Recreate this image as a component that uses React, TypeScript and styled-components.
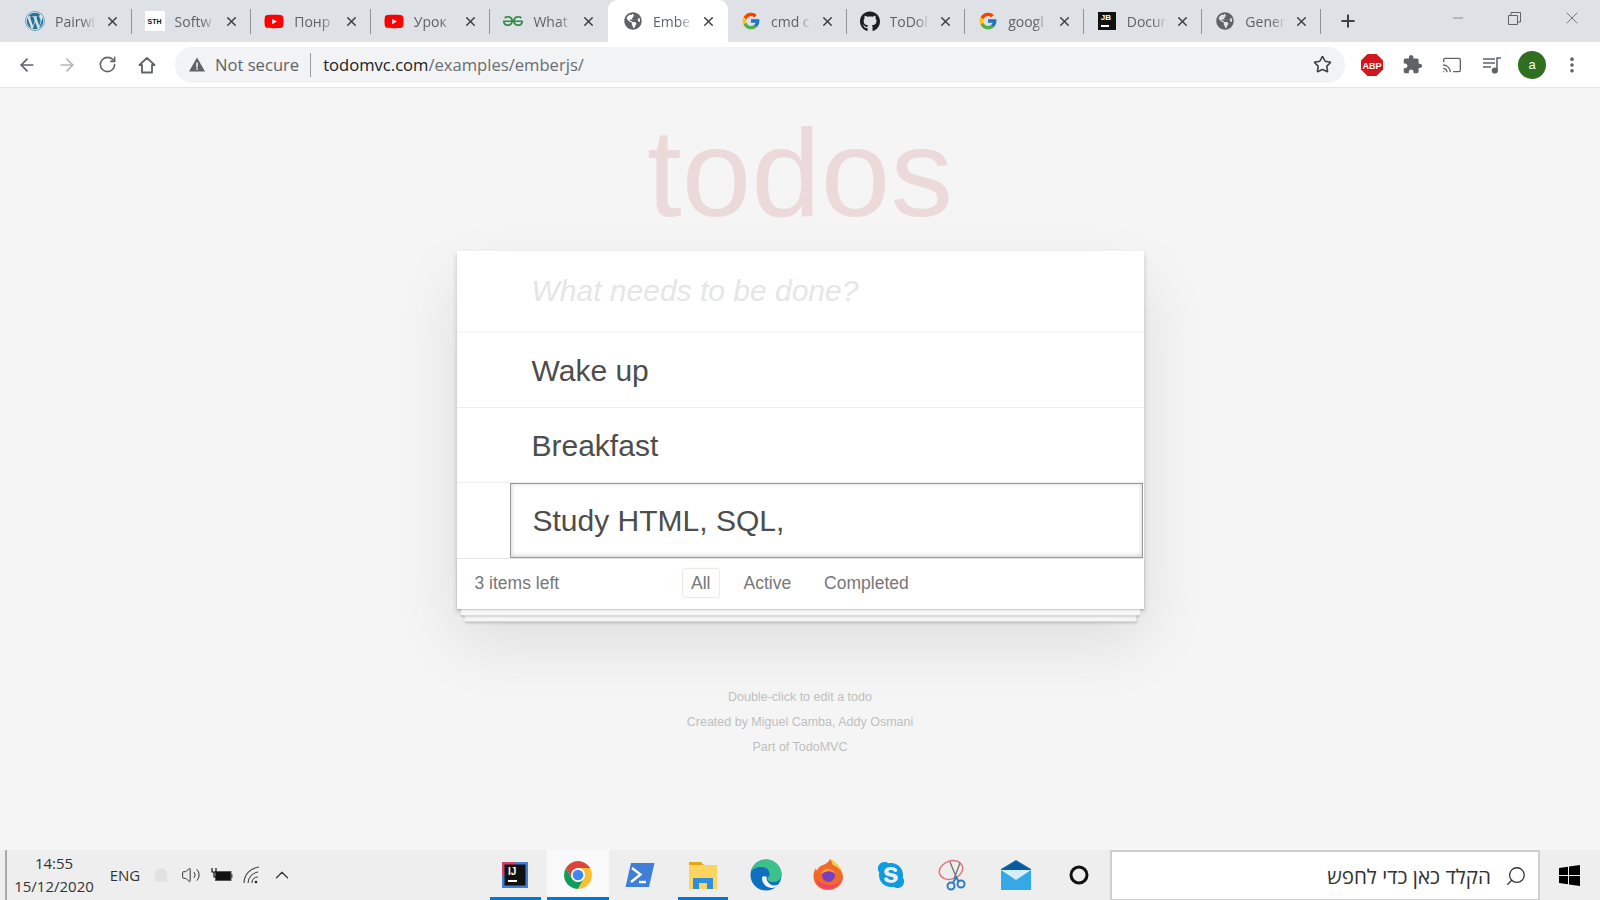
import React from 'react'
import styled, { createGlobalStyle } from 'styled-components'
import { FaWordpress, FaYoutube, FaGithub, FaGlobeAmericas, FaSkype } from 'react-icons/fa'
import { FcGoogle } from 'react-icons/fc'
import { SiGeeksforgeeks } from 'react-icons/si'
import { ArrowLeft, ArrowRight, RotateCw, Star, Cast, MoreVertical, Plus, X, Minus, Search, ChevronUp, Volume2 } from 'lucide-react'

const GlobalStyle = createGlobalStyle`
  html, body { margin: 0; padding: 0; height: 900px; overflow: hidden; }
  body { background: #f5f5f5; font-family: "Liberation Sans", Arial, sans-serif; }
  * { box-sizing: border-box; }
`

const Screen = styled.div`
  width: 1600px;
  height: 900px;
  display: flex;
  flex-direction: column;
  overflow: hidden;
`

/* browser chrome */
const TabStrip = styled.div`
  height: 42px;
  flex: none;
  background: #dee1e6;
  display: flex;
  align-items: stretch;
  padding-left: 12px;
`

const Tab = styled.div<{ $active?: boolean; $sep?: boolean }>`
  position: relative;
  width: 118.6px;
  flex: none;
  display: flex;
  align-items: center;
  padding: 0 12px 0 ${p => (p.$active ? 15 : 13)}px;
  background: ${p => (p.$active ? '#fff' : 'transparent')};
  border-radius: ${p => (p.$active ? '9px 9px 0 0' : '0')};

  /* the strip is not evenly spaced either side of the selected tab */
  &:nth-child(-n + 4) { width: 119.6px; }
  &:nth-child(5) { width: 117.6px; }
  &:nth-child(6) { width: 120px; }

  ${p => p.$sep && `
    &::after {
      content: '';
      position: absolute;
      right: 0;
      top: 9px;
      height: 25px;
      width: 1px;
      background: #8f9296;
    }
  `}
`

const Favicon = styled.span`
  width: 20px;
  height: 20px;
  flex: none;
  display: flex;
  align-items: center;
  justify-content: center;
`

const TabTitle = styled.span`
  flex: 1;
  margin-left: 10px;
  white-space: nowrap;
  font-family: "Open Sans", "Liberation Sans", sans-serif;
  font-size: 14px;
  color: #5f6368;
  -webkit-mask-image: linear-gradient(to right, #000 62%, transparent 95%);
  mask-image: linear-gradient(to right, #000 62%, transparent 95%);
`

const CloseBtn = styled(X)`
  flex: none;
  margin-left: 6px;
  color: #3c4043;
`

const SthIcon = styled.span`
  width: 20px;
  height: 20px;
  background: #fff;
  display: flex;
  align-items: center;
  justify-content: center;
  font-size: 7px;
  font-weight: 700;
  color: #111;
`

const JbIcon = styled.span`
  width: 18px;
  height: 18px;
  background: #111;
  color: #fff;
  font-size: 8px;
  font-weight: 700;
  padding: 1px 0 0 3px;
  line-height: 9px;
  &::after {
    content: '';
    display: block;
    width: 8px;
    height: 1.5px;
    background: #fff;
    margin-top: 3px;
  }
`

const NewTab = styled.div`
  width: 54px;
  flex: none;
  display: flex;
  align-items: center;
  justify-content: center;
  color: #3c4043;
`

const WindowControls = styled.div`
  margin-left: auto;
  display: flex;
  color: #5f6368;
`

const WindowBtn = styled.div`
  width: 57px;
  height: 36px;
  display: flex;
  align-items: center;
  justify-content: center;
`

const Toolbar = styled.div`
  height: 46px;
  flex: none;
  background: #fff;
  border-bottom: 1px solid #e4e4e4;
  display: flex;
  align-items: center;
  padding: 0 8px 0 7px;
`

const NavBtn = styled.div<{ $dim?: boolean }>`
  width: 40px;
  height: 36px;
  flex: none;
  display: flex;
  align-items: center;
  justify-content: center;
  color: ${p => (p.$dim ? '#b4b6b9' : '#5f6368')};
`

const Omnibox = styled.div`
  width: 1170px;
  height: 36px;
  margin: 0 7px 0 8px;
  flex: none;
  background: #f1f3f4;
  border-radius: 18px;
  display: flex;
  align-items: center;
  padding-left: 14px;
  font-family: "Open Sans", "Liberation Sans", sans-serif;
  font-size: 16.6px;
  color: #5f6368;
`

const NotSecure = styled.span`
  margin-left: 10px;
  padding-right: 11px;
  margin-right: 12px;
  border-right: 1px solid #9a9da1;
  line-height: 24px;
`

const Url = styled.span`
  flex: 1;
  color: #6a6d71;
  b { font-weight: 400; color: #202124; }
`

const StarIcon = styled(Star)`
  margin-right: 13px;
  color: #3c4043;
`

const AbpBadge = styled.svg`
  display: block;
`

const Avatar = styled.div`
  width: 28px;
  height: 28px;
  border-radius: 50%;
  background: #2f6f1f;
  color: #fff;
  font-size: 13px;
  display: flex;
  align-items: center;
  justify-content: center;
`

/* todo app */
const Page = styled.main`
  flex: 1;
  min-height: 0;
  background: #f5f5f5;
  display: flex;
  flex-direction: column;
  align-items: center;
`

const Title = styled.h1`
  margin: 6px 0 0;
  height: 157px;
  line-height: 157px;
  font-size: 125px;
  font-weight: 400;
  color: #ecdada;
  text-align: center;
`

const Card = styled.section`
  position: relative;
  z-index: 0;
  width: 687px;
  background: #fff;
  box-shadow: 0 2.5px 5px rgba(0, 0, 0, 0.2), 0 31px 62px rgba(0, 0, 0, 0.1);
`

const NewTodo = styled.div`
  height: 82px;
  padding: 0 0 2px 75px;
  display: flex;
  align-items: center;
  font-size: 30px;
  font-style: italic;
  color: #e6e6e6;
  box-shadow: inset 0 -2px 1px rgba(0, 0, 0, 0.03);
`

const Row = styled.div`
  height: 75px;
  padding: 1px 0 0 75px;
  display: flex;
  align-items: center;
  font-size: 30px;
  color: #4d4d4d;
  border-bottom: 1px solid #ededed;
`

const EditRow = styled.div`
  height: 75px;
  padding-left: 53px;
  display: flex;
`

const EditBox = styled.div`
  flex: 1;
  margin-right: 1px;
  border: 1px solid #999;
  box-shadow: inset 0 -1px 5px rgba(0, 0, 0, 0.2);
  padding-left: 22px;
  display: flex;
  align-items: center;
  font-size: 30px;
  color: #4d4d4d;
`

const Footer = styled.footer`
  position: relative;
  height: 51px;
  display: flex;
  align-items: center;
  padding: 0 0 2px 18px;
  font-size: 17.5px;
  color: #777;
  border-top: 1px solid #e6e6e6;

  &::before {
    content: '';
    position: absolute;
    left: 0;
    right: 0;
    top: 0;
    bottom: 0;
    z-index: -1;
    box-shadow: 0 1.25px 1.25px rgba(0, 0, 0, 0.2), 0 10px 0 -3.75px #f6f6f6,
      0 11.25px 1.25px -3.75px rgba(0, 0, 0, 0.2), 0 20px 0 -7.5px #f6f6f6,
      0 21.25px 2.5px -7.5px rgba(0, 0, 0, 0.2);
  }
`

const Count = styled.span`
  width: 207px;
`

const Filter = styled.span<{ $on?: boolean }>`
  height: 30px;
  padding: 0 8.5px;
  margin-right: 14px;
  display: flex;
  align-items: center;
  border: 1px solid ${p => (p.$on ? 'rgba(175, 47, 47, 0.12)' : 'transparent')};
  border-radius: 3px;
`

const Info = styled.footer`
  margin-top: 76px;
  font-size: 12.5px;
  line-height: 25px;
  color: #bfbfbf;
  text-align: center;
`

/* windows taskbar */
const Taskbar = styled.div`
  height: 50px;
  flex: none;
  background: #eeeeee;
  display: flex;
  align-items: stretch;
`

const Tray = styled.div`
  width: 484px;
  flex: none;
  margin-left: 5px;
  border-left: 2px solid #a9a9a9;
  display: flex;
  align-items: center;
  color: #333;
`

const Clock = styled.div`
  width: 94px;
  flex: none;
  font-family: "Open Sans", "Liberation Sans", sans-serif;
  font-size: 15px;
  line-height: 23px;
  text-align: center;
`

const TrayItem = styled.div<{ $w: number }>`
  width: ${p => p.$w}px;
  flex: none;
  display: flex;
  align-items: center;
  justify-content: center;
  font-family: "Open Sans", "Liberation Sans", sans-serif;
  font-size: 15px;
  color: #333;
`

const Apps = styled.div`
  display: flex;
  margin-left: -5px;
`

const AppSlot = styled.div<{ $running?: boolean; $active?: boolean }>`
  position: relative;
  width: 62.6px;
  display: flex;
  align-items: center;
  justify-content: center;
  background: ${p => (p.$active ? '#f9f9f9' : 'transparent')};
  ${p => p.$running && `
    &::after {
      content: '';
      position: absolute;
      bottom: 0;
      height: 3px;
      left: ${p.$active ? 0 : 6}px;
      right: ${p.$active ? 0 : 6}px;
      background: #0078d7;
    }
  `}
`

const SearchBox = styled.div`
  width: 430px;
  flex: none;
  background: #fff;
  border: 2px solid #cfcfcf;
  border-bottom-width: 1px;
  display: flex;
  align-items: center;
  justify-content: flex-end;
  gap: 14px;
  padding-right: 11px;
  font-family: "Open Sans", "Liberation Sans", sans-serif;
  font-size: 20.6px;
  color: #333;
`

const SearchGlass = styled(Search)`
  transform: scaleX(-1);
  color: #333;
`

const StartBtn = styled.div`
  flex: 1;
  display: flex;
  align-items: center;
  justify-content: center;
`

const tabs: { icon: React.ReactNode; title: string; active?: boolean; sep?: boolean }[] = [
  { icon: <FaWordpress size={20} color="#21759b" />, title: 'Pairwi', sep: true },
  { icon: <SthIcon>STH</SthIcon>, title: 'Softw', sep: true },
  { icon: <FaYoutube size={21} color="#f00" />, title: 'Понр', sep: true },
  { icon: <FaYoutube size={21} color="#f00" />, title: 'Урок', sep: true },
  { icon: <SiGeeksforgeeks size={20} color="#2f8d46" />, title: 'What' },
  { icon: <FaGlobeAmericas size={18} color="#5f6368" />, title: 'Embe', active: true },
  { icon: <FcGoogle size={20} />, title: 'cmd c', sep: true },
  { icon: <FaGithub size={21} color="#1b1f23" />, title: 'ToDol', sep: true },
  { icon: <FcGoogle size={20} />, title: 'googl', sep: true },
  { icon: <JbIcon>JB</JbIcon>, title: 'Docur', sep: true },
  { icon: <FaGlobeAmericas size={18} color="#5f6368" />, title: 'Gener', sep: true },
]

const IdeaIcon = () => (
  <svg width="26" height="26" viewBox="0 0 26 26">
    <rect width="26" height="26" fill="#3f7fd8" />
    <rect width="13" height="13" fill="#d0406f" />
    <rect x="2.5" y="2.5" width="21" height="21" fill="#111" />
    <text x="6" y="13" fontSize="10" fontWeight="700" fill="#fff" fontFamily="Liberation Sans">IJ</text>
    <rect x="6" y="18" width="9" height="2" fill="#fff" />
  </svg>
)

const ChromeIcon = () => (
  <svg width="28" height="28" viewBox="4 4 40 40">
    <path d="M6.68 14A20 20 0 0 1 41.32 14H24a10 10 0 0 0-8.66 15z" fill="#db4437" />
    <path d="M6.68 14A20 20 0 0 0 24 44l8.66-15a10 10 0 0 1-17.32 0z" fill="#0f9d58" />
    <path d="M41.32 14A20 20 0 0 1 24 44l8.66-15A10 10 0 0 0 24 14z" fill="#fbc02d" />
    <circle cx="24" cy="24" r="9.5" fill="#fff" />
    <circle cx="24" cy="24" r="7.6" fill="#4285f4" />
  </svg>
)

const ShellIcon = () => (
  <svg width="30" height="26" viewBox="0 0 30 26">
    <path d="M6 1h23.5L24 25H.5z" fill="#3f7fd8" />
    <path d="M7 6l8.5 6.5L6 20" fill="none" stroke="#fff" strokeWidth="2.4" />
    <path d="M14 20h7" stroke="#fff" strokeWidth="2.4" />
  </svg>
)

const FolderIcon = () => (
  <svg width="28" height="28" viewBox="0 0 28 28">
    <path d="M0 1h12l3 3h-15z" fill="#e2a51c" />
    <rect y="4" width="28" height="24" fill="#fcd462" />
    <path d="M4 28V17h20v11h-6v-6h-8v6z" fill="#2f8fd8" />
  </svg>
)

const EdgeIcon = () => (
  <svg width="32" height="32" viewBox="0 0 32 32">
    <circle cx="16" cy="16" r="15.5" fill="#0f6fc0" />
    <path d="M1 13C3 5 9 .5 16 .5c9 0 15.5 7 15.5 15 0 5-4 7.5-8 7.5-3.5 0-6-1-6-3 0-1.5 2-2 2-5 0-4-3-7-8-7-5 0-9 2-10.5 5z" fill="#3cc18a" />
    <path d="M12 19c0 6 5 10 10 10 2 0 5-1 7-4-3 2-7 1.5-8.5.5C17 23 16 20 17 18c-2-1-5-1-5 1z" fill="#eef6fb" />
  </svg>
)

const FirefoxIcon = () => (
  <svg width="30" height="32" viewBox="0 0 30 32">
    <path d="M15 31C6.5 31 .5 25 .5 17.5.5 14 1.5 11 3 9c0 1 .5 2 1 2.5C5 8.5 8 6.500 10 6c3-1 6-3 7-6 3 3 2 5 2 5 5 1 11 6 11 13 0 7-6.5 13-15 13z" fill="#f2692c" />
    <path d="M18 0c6 4 12 10 12 18 0-3-2-7-5-9-2-2-4-2-6-4 .5-2 0-3-1-5z" fill="#ffc93c" />
    <path d="M3 20c1 6 6 10 12 10 6 0 11-4 13-9-3 4-8 6-13 5-5-.5-9-3-12-6z" fill="#f0416c" />
    <circle cx="15.5" cy="16.5" r="6.5" fill="#7a3fc0" />
    <path d="M8 15c1-4 5-6 9-5 3 .5 5 3 5 5-2-2-5-3-8-2.5-2 .5-4 1.5-6 2.5z" fill="#f89a3c" />
  </svg>
)

const SnipIcon = () => (
  <svg width="30" height="32" viewBox="0 0 30 32" fill="none">
    <ellipse cx="13" cy="11" rx="12" ry="9" stroke="#e4746f" strokeWidth="1.4" transform="rotate(-20 13 11)" />
    <path d="M12 3l7 17M22 4l-6 16" stroke="#777" strokeWidth="1.4" />
    <circle cx="13" cy="27" r="3.5" stroke="#2f7fc4" strokeWidth="2" />
    <circle cx="23" cy="25" r="3.5" stroke="#2f7fc4" strokeWidth="2" />
    <path d="M15 24l3-6 3 5" stroke="#2f7fc4" strokeWidth="2" />
  </svg>
)

const MailIcon = () => (
  <svg width="30" height="30" viewBox="0 0 30 30">
    <path d="M0 9L15 0l15 9v21H0z" fill="#0f74bf" />
    <rect y="10" width="30" height="20" fill="#35a8e8" />
    <path d="M0 10h30L15 20z" fill="#d5eefb" />
    <path d="M0 10L15 1l15 9z" fill="#0a5a9c" />
  </svg>
)

const CortanaIcon = () => (
  <svg width="20" height="20" viewBox="0 0 20 20">
    <circle cx="10" cy="10" r="8" fill="none" stroke="#111" strokeWidth="3" />
  </svg>
)

const WinLogo = () => (
  <svg width="21" height="21" viewBox="0 0 21 21" fill="#000">
    <path d="M0 3l9-1.3V10H0zM10 1.5L21 0v10H10zM0 11h9v8.3L0 18zM10 11h11v10l-11-1.5z" />
  </svg>
)

const BatteryIcon = () => (
  <svg width="22" height="14" viewBox="0 0 22 14">
    <rect x="4.5" y="3.5" width="15.5" height="9" fill="#111" stroke="#555" />
    <rect x="20" y="6" width="1.5" height="4" fill="#555" />
    <path d="M1 0v4h4V0M3 4v5h3" fill="none" stroke="#111" strokeWidth="1.2" />
  </svg>
)

const WifiIcon = () => (
  <svg width="18" height="18" viewBox="0 0 18 18" fill="none" stroke="#444" strokeWidth="1.1">
    <path d="M1 17C1 9 7 2 16 1M5 17c0-5 4-10 10-11M9 17c0-3 2-6 6-6" />
    <circle cx="13" cy="16" r="1.3" fill="#222" stroke="none" />
  </svg>
)

const CloudIcon = () => (
  <svg width="18" height="16" viewBox="0 0 18 16">
    <circle cx="9" cy="7" r="6" fill="#e2e2e2" />
    <rect x="3" y="8" width="12" height="7" fill="#e2e2e2" />
  </svg>
)

const HomeIcon = () => (
  <svg width="20" height="20" viewBox="0 0 24 24" fill="none" stroke="currentColor" strokeWidth="2.2" strokeLinejoin="round">
    <path d="M3 12L12 3.5 21 12h-3v9H6v-9z" />
  </svg>
)

const ExtensionIcon = () => (
  <svg width="21" height="21" viewBox="0 0 24 24" fill="#5f6368">
    <path d="M20.5 11H19V7c0-1.1-.9-2-2-2h-4V3.5C13 2.12 11.88 1 10.5 1S8 2.12 8 3.5V5H4c-1.1 0-1.99.9-1.99 2v3.8H3.5c1.49 0 2.7 1.21 2.7 2.7s-1.21 2.7-2.7 2.7H2V20c0 1.1.9 2 2 2h3.8v-1.500c0-1.49 1.21-2.7 2.7-2.7 1.49 0 2.7 1.21 2.7 2.7V22H17c1.1 0 2-.9 2-2v-4h1.500c1.38 0 2.5-1.12 2.5-2.5S21.88 11 20.5 11z" />
  </svg>
)

const QueueIcon = () => (
  <svg width="20" height="20" viewBox="0 0 20 20" fill="none" stroke="#5f6368" strokeWidth="1.6">
    <path d="M1 4h12M1 8h12M1 12h8M15 15V3h4" />
    <circle cx="12.8" cy="15.5" r="2.3" fill="#5f6368" />
  </svg>
)

const App: React.FC = () => {
  return (
    <Screen>
      <GlobalStyle />
      <TabStrip>
        {tabs.map(t => (
          <Tab key={t.title} $active={t.active} $sep={t.sep}>
            <Favicon>{t.icon}</Favicon>
            <TabTitle>{t.title}</TabTitle>
            <CloseBtn size={15} strokeWidth={2.4} />
          </Tab>
        ))}
        <NewTab><Plus size={20} strokeWidth={2.4} /></NewTab>
        <WindowControls>
          <WindowBtn><Minus size={16} strokeWidth={1} /></WindowBtn>
          <WindowBtn>
            <svg width="13" height="13" viewBox="0 0 13 13" fill="none" stroke="#5f6368">
              <path d="M.5 3.5h9v9h-9zM3 3.5V.5h9.5V10H9.5" />
            </svg>
          </WindowBtn>
          <WindowBtn><X size={20} strokeWidth={1} /></WindowBtn>
        </WindowControls>
      </TabStrip>

      <Toolbar>
        <NavBtn><ArrowLeft size={20} strokeWidth={2} /></NavBtn>
        <NavBtn $dim><ArrowRight size={20} strokeWidth={2} /></NavBtn>
        <NavBtn><RotateCw size={19} strokeWidth={2} /></NavBtn>
        <NavBtn><HomeIcon /></NavBtn>
        <Omnibox>
          <svg width="16" height="15" viewBox="0 0 16 15">
            <path d="M8 .5L16 14.5H0z" fill="#5f6368" />
            <path d="M7.3 5.5h1.4v5H7.3zM7.3 11.3h1.4v1.4H7.3z" fill="#fff" />
          </svg>
          <NotSecure>Not secure</NotSecure>
          <Url><b>todomvc.com</b>/examples/emberjs/</Url>
          <StarIcon size={19} strokeWidth={2} />
        </Omnibox>
        <NavBtn>
          <AbpBadge width="22" height="22" viewBox="0 0 22 22">
            <path d="M6.5 0h9L22 6.5v9L15.5 22h-9L0 15.5v-9z" fill="#d3161b" />
            <text x="11" y="14.5" textAnchor="middle" fontSize="9" fontWeight="700" fill="#fff" fontFamily="Liberation Sans">ABP</text>
          </AbpBadge>
        </NavBtn>
        <NavBtn><ExtensionIcon /></NavBtn>
        <NavBtn><Cast size={20} strokeWidth={1.6} /></NavBtn>
        <NavBtn><QueueIcon /></NavBtn>
        <NavBtn><Avatar>a</Avatar></NavBtn>
        <NavBtn><MoreVertical size={20} strokeWidth={2.4} /></NavBtn>
      </Toolbar>

      <Page>
        <Title>todos</Title>
        <Card>
          <NewTodo>What needs to be done?</NewTodo>
          <Row>Wake up</Row>
          <Row>Breakfast</Row>
          <EditRow><EditBox>Study HTML, SQL,</EditBox></EditRow>
          <Footer>
            <Count>3 items left</Count>
            <Filter $on>All</Filter>
            <Filter>Active</Filter>
            <Filter>Completed</Filter>
          </Footer>
        </Card>
        <Info>
          <div>Double-click to edit a todo</div>
          <div>Created by Miguel Camba, Addy Osmani</div>
          <div>Part of TodoMVC</div>
        </Info>
      </Page>

      <Taskbar>
        <Tray>
          <Clock>
            <div>14:55</div>
            <div>15/12/2020</div>
          </Clock>
          <TrayItem $w={48}>ENG</TrayItem>
          <TrayItem $w={24}><CloudIcon /></TrayItem>
          <TrayItem $w={36}><Volume2 size={20} strokeWidth={1.2} /></TrayItem>
          <TrayItem $w={25}><BatteryIcon /></TrayItem>
          <TrayItem $w={36}><WifiIcon /></TrayItem>
          <TrayItem $w={24}><ChevronUp size={22} strokeWidth={1.3} /></TrayItem>
        </Tray>
        <Apps>
          <AppSlot $running><IdeaIcon /></AppSlot>
          <AppSlot $running $active><ChromeIcon /></AppSlot>
          <AppSlot><ShellIcon /></AppSlot>
          <AppSlot $running><FolderIcon /></AppSlot>
          <AppSlot><EdgeIcon /></AppSlot>
          <AppSlot><FirefoxIcon /></AppSlot>
          <AppSlot><FaSkype size={30} color="#0f9be0" /></AppSlot>
          <AppSlot><SnipIcon /></AppSlot>
          <AppSlot><MailIcon /></AppSlot>
          <AppSlot><CortanaIcon /></AppSlot>
        </Apps>
        <SearchBox>
          <span dir="rtl">הקלד כאן כדי לחפש</span>
          <SearchGlass size={22} strokeWidth={1.4} />
        </SearchBox>
        <StartBtn><WinLogo /></StartBtn>
      </Taskbar>
    </Screen>
  )
}

export default App
